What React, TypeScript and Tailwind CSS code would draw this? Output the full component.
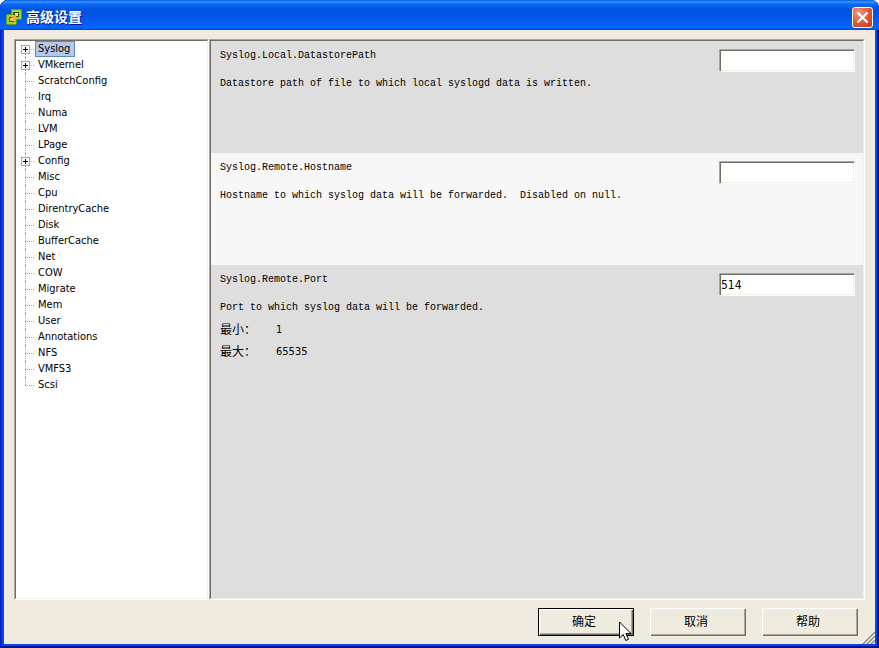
import { useState } from "react";
import type { ReactNode } from "react";

const tree = [
  { name: "Syslog", expandable: true },
  { name: "VMkernel", expandable: true },
  { name: "ScratchConfig" },
  { name: "Irq" },
  { name: "Numa" },
  { name: "LVM" },
  { name: "LPage" },
  { name: "Config", expandable: true },
  { name: "Misc" },
  { name: "Cpu" },
  { name: "DirentryCache" },
  { name: "Disk" },
  { name: "BufferCache" },
  { name: "Net" },
  { name: "COW" },
  { name: "Migrate" },
  { name: "Mem" },
  { name: "User" },
  { name: "Annotations" },
  { name: "NFS" },
  { name: "VMFS3" },
  { name: "Scsi" },
];

const settings = [
  {
    key: "Syslog.Local.DatastorePath",
    description: "Datastore path of file to which local syslogd data is written.",
    value: "",
  },
  {
    key: "Syslog.Remote.Hostname",
    description: "Hostname to which syslog data will be forwarded.  Disabled on null.",
    value: "",
  },
  {
    key: "Syslog.Remote.Port",
    description: "Port to which syslog data will be forwarded.",
    value: "514",
    min: 1,
    max: 65535,
  },
];

function AppIcon() {
  return (
    <svg width="16" height="16" viewBox="0 0 16 16" aria-hidden="true">
      <path d="M5 0h10l1 1v9l-1 1h-4v4l-1 1H1l-1-1V6l1-1h4z" fill="#5d9e1c" />
      <path d="M6 1h9v9h-5v5H1V6h5z" fill="#a4cf35" />
      <path d="M8 3h5v5H8v5H3V8h5z" fill="#2c5f1e" />
      <rect x="7" y="3" width="6" height="5" fill="#2c5f1e" />
      <rect x="3" y="8" width="5" height="5" fill="#2c5f1e" />
      <rect x="9" y="4" width="3" height="3" fill="#ffd75e" />
      <rect x="6" y="6" width="4" height="4" fill="#f9a72c" />
      <rect x="4" y="9" width="4" height="3" fill="#ffc23c" />
    </svg>
  );
}

function Cursor() {
  return (
    <svg className="absolute top-3 left-20" width="13" height="21" viewBox="0 0 13 21" aria-hidden="true">
      <path
        d="M.5 1v16l3.700-3.500 2.600 6 2.700-1.200-2.600-5.800H12z"
        fill="#fff"
        stroke="#000"
      />
    </svg>
  );
}

function Sunken({ className, children }: { className: string; children: ReactNode }) {
  return (
    <div className={`flex border border-t-[#aca899] border-l-[#aca899] border-r-white border-b-white ${className}`}>
      <div className="flex min-w-0 flex-1 flex-col border border-t-[#716f64] border-l-[#716f64] border-r-[#f1efe2] border-b-[#f1efe2]">
        {children}
      </div>
    </div>
  );
}

function DialogButton({ primary, children }: { primary?: boolean; children: ReactNode }) {
  return (
    <button
      className={`relative h-7 w-24 bg-[#efebde] pr-1 text-center text-xs shadow-[inset_1px_1px_0_#fff,inset_-1px_-1px_0_#716f64,inset_-2px_-2px_0_#aca899] ${
        primary ? "border border-black" : ""
      }`}
    >
      {children}
    </button>
  );
}

export default function App() {
  const [selected, setSelected] = useState("Syslog");

  return (
    <div className="bg-white font-['DejaVu_Sans_Condensed','Noto_Sans_CJK_SC',sans-serif] text-black">
      <div className="relative flex min-h-screen flex-col overflow-hidden rounded-t-lg bg-[#0848e8] px-1 pb-1 shadow-[inset_1px_0_0_#0019cf,inset_-2px_-2px_0_#00138c,inset_2px_0_0_#0831d9]">
        <header className="-mx-1 flex h-[30px] items-center bg-[linear-gradient(#0058e6_0%,#3a93ff_6%,#0a6af5_14%,#0055e0_30%,#0054e3_55%,#0062fb_80%,#0066ff_92%,#0046cc_100%)] pt-1 pr-1.5 pl-1.5">
          <AppIcon />
          <h1 className="ml-1 flex-1 text-sm font-bold text-white [text-shadow:1px_1px_0_#0a1883]">高级设置</h1>
          <button
            aria-label="关闭"
            className="flex size-[21px] items-center justify-center rounded-[3px] border border-white bg-[radial-gradient(circle_at_30%_25%,#f09a7c,#e0552f_55%,#c43a12)]"
          >
            <svg width="13" height="13" viewBox="0 0 13 13" aria-hidden="true">
              <path d="M1.500 1.500l10 10M11.500 1.500l-10 10" stroke="#fff" strokeWidth="2.200" />
            </svg>
          </button>
        </header>

        <main className="flex flex-1 flex-col bg-[#efebde] pt-[9px] pl-2.5">
          <div className="flex flex-1 pr-2.5">
            <Sunken className="w-[195px] bg-white">
              <ul className="text-[11px]">
                {tree.map((item, i) => (
                  <li key={item.name} className="relative flex h-4 items-center pl-[5px]">
                    <span
                      className={`absolute left-[9px] border-l border-dotted border-[#aca899] ${
                        i === 0 ? "top-2 bottom-0" : i === tree.length - 1 ? "top-0 bottom-2" : "inset-y-0"
                      }`}
                    />
                    <span className="absolute left-[9px] w-[9px] border-t border-dotted border-[#aca899]" />
                    <span className="relative size-[9px]">
                      {item.expandable && (
                        <button
                          aria-label={item.name}
                          className="flex size-[9px] items-center justify-center border border-[#aca899] bg-white"
                        >
                          <svg width="5" height="5" viewBox="0 0 5 5" aria-hidden="true">
                            <path d="M0 2h5v1H0zM2 0h1v5H2z" />
                          </svg>
                        </button>
                      )}
                    </span>
                    <button
                      onClick={() => setSelected(item.name)}
                      className={`ml-[5px] h-4 border pr-1 pl-0.5 leading-3 ${
                        selected === item.name ? "border-[#5a8ac8] bg-[#b6c7e8]" : "border-transparent"
                      }`}
                    >
                      {item.name}
                    </button>
                  </li>
                ))}
              </ul>
            </Sunken>

            <Sunken className="min-w-0 flex-1 bg-[#dedede]">
              {settings.map((setting) => (
                <section key={setting.key} className="min-h-28 bg-[#dedede] px-2 pt-2 even:bg-[#f7f7f7]">
                  <div className="flex justify-between">
                    <div className="font-['Liberation_Mono',monospace] text-[10px] leading-[14px] whitespace-pre">
                      <label htmlFor={setting.key} className="block px-px">
                        {setting.key}
                      </label>
                      <p className="mt-3.5 px-px">{setting.description}</p>
                    </div>
                    <input
                      id={setting.key}
                      defaultValue={setting.value}
                      className="h-[23px] w-[136px] border border-t-[#aca899] border-r-white border-b-white border-l-[#aca899] bg-white px-px text-xs shadow-[inset_1px_1px_0_#716f64,inset_-1px_-1px_0_#f1efe2] outline-none"
                    />
                  </div>
                  {setting.max && (
                    <dl className="mt-1 grid grid-cols-[56px_1fr] px-px text-[11px] leading-[22px]">
                      <dt className="text-xs leading-[22px]">最小：</dt>
                      <dd>{setting.min}</dd>
                      <dt className="text-xs leading-[22px]">最大：</dt>
                      <dd>{setting.max}</dd>
                    </dl>
                  )}
                </section>
              ))}
            </Sunken>
          </div>

          <footer className="flex justify-end gap-4 pt-2 pr-[17px] pb-2">
            <DialogButton primary>
              确定
              <Cursor />
            </DialogButton>
            <DialogButton>取消</DialogButton>
            <DialogButton>帮助</DialogButton>
          </footer>
        </main>

        <svg className="absolute right-1 bottom-1" width="13" height="13" viewBox="0 0 13 13" aria-hidden="true">
          <path d="M0 12L12 0M4 12l8-8M8 12l4-4" stroke="#fff" />
          <path d="M1 13L13 1M5 13l8-8M9 13l4-4" stroke="#8f8c7c" strokeWidth="1.500" />
        </svg>
      </div>
    </div>
  );
}
